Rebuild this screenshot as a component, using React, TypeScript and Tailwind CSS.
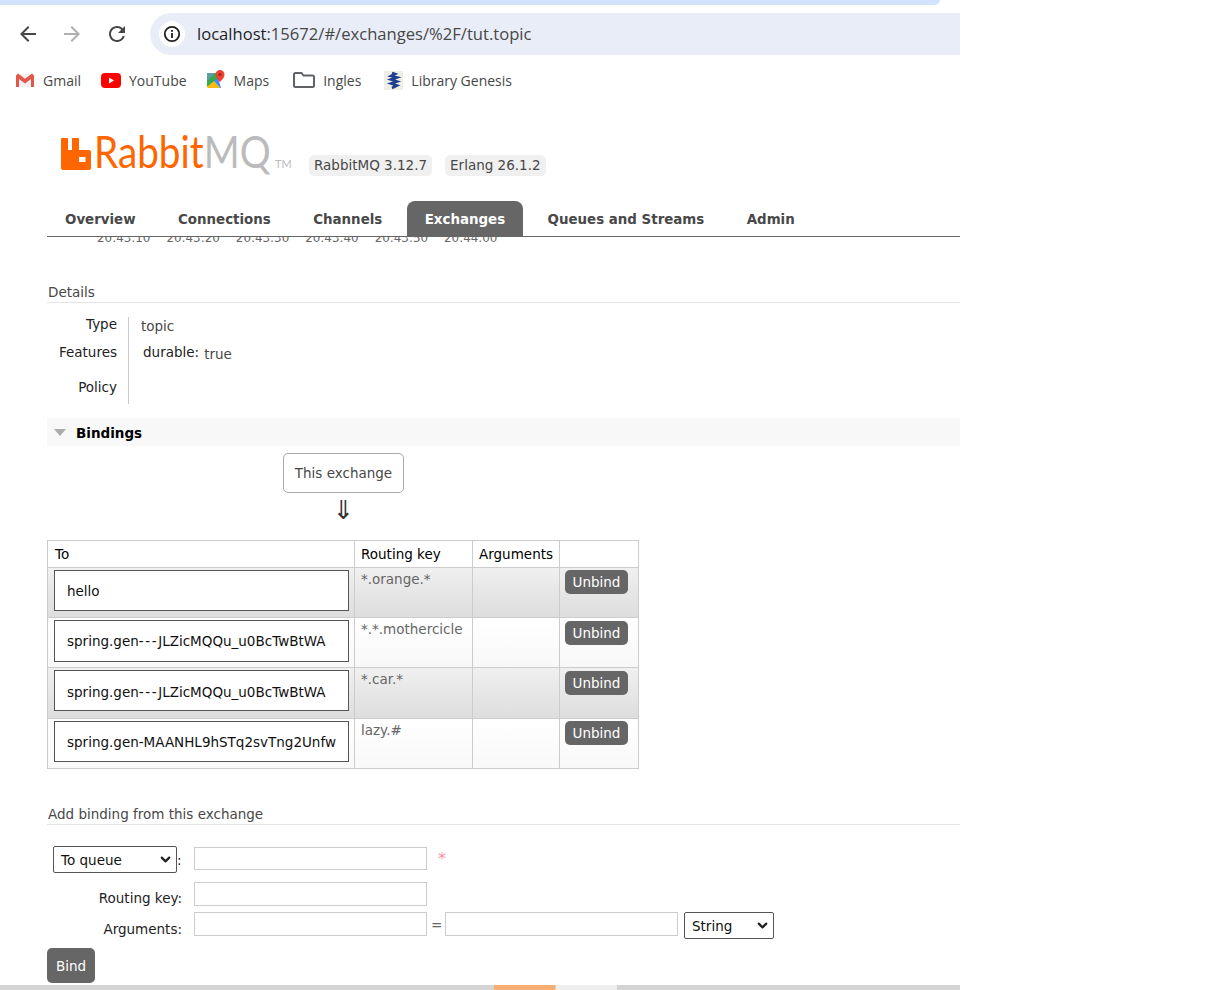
import type { ReactNode } from 'react';
import { ChevronDown } from 'lucide-react';

const bookmarkText = 'text-[14px] text-[#474747]';

const tabs = ['Overview', 'Connections', 'Channels', 'Exchanges', 'Queues and Streams', 'Admin'];
const ticks = ['20:43:10', '20:43:20', '20:43:30', '20:43:40', '20:43:50', '20:44:00'];

const jlz: ReactNode = (
  <>
    spring.gen<span className="tracking-[1.6px]">---</span>JLZicMQQu_u0BcTwBtWA
  </>
);

const bindings: { queue: ReactNode; key: string; alt: boolean; h: string; box: string; btn: string }[] = [
  { queue: 'hello', key: '*.orange.*', alt: true, h: 'h-[50px]', box: 'h-[41px] pt-[2px]', btn: 'pt-[2px]' },
  { queue: jlz, key: '*.*.mothercicle', alt: false, h: 'h-[50px]', box: 'h-[42px]', btn: 'pt-[3px]' },
  { queue: jlz, key: '*.car.*', alt: true, h: 'h-[51px]', box: 'h-[41px] pt-[4px]', btn: 'pt-[3px]' },
  { queue: 'spring.gen-MAANHL9hSTq2svTng2Unfw', key: 'lazy.#', alt: false, h: 'h-[50px]', box: 'h-[41px] pt-[2px]', btn: 'pt-[2px]' },
];

const GmailIcon = () => (
  <svg width="20" height="16" viewBox="0 0 20 16">
    <path d="M2 2h16v13H2z" fill="#f1f1f1" />
    <path d="M1 3.500V15h3V7l6 4.500L16 7v8h3V3.500L17 1.500 10 6.800 3 1.500z" fill="#e2574c" />
  </svg>
);

const YoutubeIcon = () => (
  <svg width="20" height="15" viewBox="0 0 20 15">
    <rect width="20" height="15" rx="4" fill="#ff0000" />
    <path d="M8 4.500v6l5-3z" fill="#ffffff" />
  </svg>
);

const MapsIcon = () => (
  <svg width="20" height="20" viewBox="0 0 20 20">
    <path d="M1 3h11v6L1 17z" fill="#34a853" />
    <path d="M1 3h8L1 11z" fill="#5f9ea0" />
    <path d="M1 17l7-6 6 7H2z" fill="#fbbc04" />
    <path d="M8 11l4-3 3 10h-1z" fill="#4285f4" />
    <path d="M14 0a4.500 4.500 0 00-4.500 4.500C9.500 8 14 12 14 12s4.500-4 4.500-7.500A4.500 4.500 0 0014 0z" fill="#ea4335" />
    <circle cx="14" cy="4.500" r="1.500" fill="#a52714" />
  </svg>
);

const FolderIcon = () => (
  <svg width="22" height="16" viewBox="0 0 22 16" fill="none">
    <path d="M2.500 1h6l2 2.500h9a1.500 1.500 0 011.500 1.500v8.500a1.500 1.500 0 01-1.500 1.500h-17A1.500 1.500 0 011 13.500v-11A1.500 1.500 0 012.500 1z" stroke="#5f6368" strokeWidth="2" />
  </svg>
);

const GenesisIcon = () => (
  <svg width="19" height="19" viewBox="0 0 19 19">
    <rect width="19" height="19" fill="#eeeee4" />
    <path d="M8 2l3 1-4 2 6 1.500-6 2 6 2-6 2 6 2-5 2.500" fill="none" stroke="#1c3f8f" strokeWidth="2.600" />
  </svg>
);

const RabbitMark = () => (
  <svg width="30" height="32" viewBox="0 0 30 32">
    <path
      fillRule="evenodd"
      d="M1 0h5c.6 0 1 .4 1 1v11h4V1c0-.6.4-1 1-1h5c.6 0 1 .4 1 1v11h10c1 0 2 .8 2 2v16c0 1-.8 2-2 2H2c-1 0-2-.8-2-2V1c0-.6.4-1 1-1zM18 19v5h6.500v-5z"
      fill="#ff6600"
    />
  </svg>
);

function SectionTitle({ children }: { children: string }) {
  return (
    <div className="ml-[47px] w-[913px] border-b border-[#e4e4e4] pl-px text-[13.5px] leading-[20px] text-[#484848]">
      {children}
    </div>
  );
}

function TextBox({ className = 'w-[233px] h-[24px]' }: { className?: string }) {
  return <input className={`${className} border border-[#cccccc] bg-white`} />;
}

function NativeSelect({ label, className }: { label: string; className: string }) {
  return (
    <div className={`${className} flex items-center justify-between rounded-[2px] border border-[#555555] pl-[7px] pr-[3px] text-[13.5px] text-[#111111]`}>
      <span className="mt-px">{label}</span>
      <ChevronDown size={15} strokeWidth={3.5} className="text-[#222222]" />
    </div>
  );
}

export default function App() {
  return (
    <div className="h-[990px] w-[1206px] overflow-hidden bg-white font-['DejaVu_Sans',sans-serif]">
      {/* browser chrome */}
      <div className="h-[5px] w-[940px] rounded-br-[6px] bg-[#d3e3fd]" />
      <div className="flex h-[50px] w-[960px] items-end">
        <div className="flex h-[42px] w-[150px] items-center pl-[16px]">
          <svg width="24" height="24" viewBox="0 0 24 24" fill="#474747">
            <path d="M20 11H7.830l5.590-5.590L12 4l-8 8 8 8 1.410-1.410L7.830 13H20v-2z" />
          </svg>
          <svg className="ml-[20px]" width="24" height="24" viewBox="0 0 24 24" fill="#b0b0b0">
            <path d="M4 11h12.170l-5.590-5.590L12 4l8 8-8 8-1.410-1.410L16.170 13H4v-2z" />
          </svg>
          <svg className="ml-[21px]" width="24" height="24" viewBox="0 0 24 24" fill="#474747">
            <path d="M17.650 6.350A7.958 7.958 0 0012 4c-4.420 0-7.990 3.580-7.990 8s3.570 8 7.990 8c3.730 0 6.840-2.550 7.730-6h-2.080A5.990 5.990 0 0112 18c-3.310 0-6-2.690-6-6s2.690-6 6-6c1.660 0 3.140.690 4.220 1.780L13 11h7V4l-2.350 2.350z" />
          </svg>
        </div>
        <div className="flex h-[42px] w-[810px] items-center rounded-l-full bg-[#e9edf7] pl-[9px]">
          <div className="flex h-[26px] w-[26px] items-center justify-center rounded-full bg-white">
            <svg width="18" height="18" viewBox="0 0 18 18" fill="none">
              <circle cx="9" cy="9" r="7.200" stroke="#1f1f1f" strokeWidth="1.800" />
              <rect x="8.100" y="8" width="1.800" height="5" fill="#1f1f1f" />
              <rect x="8.100" y="5" width="1.800" height="1.800" fill="#1f1f1f" />
            </svg>
          </div>
          <div className="ml-[12px] font-['Open_Sans',sans-serif] text-[16.600px] text-[#474747]">
            <span className="text-[#1f1f1f]">localhost</span>:15672/#/exchanges/%2F/tut.topic
          </div>
        </div>
      </div>

      {/* bookmarks */}
      <div className="flex h-[52px] w-[960px] items-center pb-[2px] pl-[15px] font-['Open_Sans',sans-serif]">
        <GmailIcon />
        <span className={`ml-[8px] ${bookmarkText}`}>Gmail</span>
        <div className="ml-[20px]"><YoutubeIcon /></div>
        <span className={`ml-[8px] ${bookmarkText}`}>YouTube</span>
        <div className="ml-[19px]"><MapsIcon /></div>
        <span className={`ml-[8px] ${bookmarkText}`}>Maps</span>
        <div className="ml-[24px]"><FolderIcon /></div>
        <span className={`ml-[8px] ${bookmarkText}`}>Ingles</span>
        <div className="ml-[23px]"><GenesisIcon /></div>
        <span className={`ml-[8px] ${bookmarkText}`}>Library Genesis</span>
      </div>

      {/* logo and versions */}
      <div className="flex h-[94px] w-[960px] items-start pl-[61px] pt-[31px]">
        <RabbitMark />
        <div className="ml-[3px] -mt-[15px] flex w-[197px] items-baseline font-['Lato',sans-serif] text-[45px] leading-[56px]">
          <div className="w-[176px] origin-left scale-x-[0.86] whitespace-nowrap">
            <span className="text-[#ff6600]">Rabbit</span>
            <span className="text-[#bbbbbb]">MQ</span>
          </div>
          <span className="ml-[5px] text-[11px] leading-none text-[#bbbbbb]">TM</span>
        </div>
        <div className="ml-[18px] mt-[17px] flex gap-[13px] text-[13.5px] leading-[21px] text-[#484848]">
          <span className="rounded-[5px] bg-[#f0f0f0] px-[5px]">RabbitMQ 3.12.7</span>
          <span className="rounded-[5px] bg-[#f0f0f0] px-[5px]">Erlang 26.1.2</span>
        </div>
      </div>

      {/* nav */}
      <div className="ml-[47px] flex h-[36px] w-[913px] items-end gap-[6.400px] border-b border-[#666666] text-[13.400px] font-bold text-[#484848]">
        {tabs.map((t) => (
          <div
            key={t}
            className={
              t === 'Exchanges'
                ? 'flex h-[35px] items-center rounded-t-[8px] bg-[#666666] px-[18px] pt-[4px] text-white'
                : 'flex h-[35px] items-center px-[18px] pt-[4px]'
            }
          >
            {t}
          </div>
        ))}
      </div>

      {/* tail of the chart, cut off under the nav */}
      <div className="ml-[97px] flex h-[7px] gap-[16px] overflow-hidden text-[11.900px] leading-none text-[#666666]">
        {ticks.map((t) => (
          <span key={t} className="-mt-[4px]">{t}</span>
        ))}
      </div>

      <div className="mt-[38px]">
        <SectionTitle>Details</SectionTitle>
      </div>

      <div className="ml-[47px] mt-[14px] flex h-[87px] text-[13.5px] text-[#222222]">
        <div className="-mt-px flex w-[70px] flex-col items-end">
          <span className="h-[28px] leading-[16px]">Type</span>
          <span className="h-[35px] leading-[16px]">Features</span>
          <span className="leading-[16px]">Policy</span>
        </div>
        <div className="ml-[11px] w-px bg-[#cccccc]" />
        <div className="flex flex-col pl-[12px]">
          <span className="h-[27px] pt-[1px] leading-[16px] text-[#484848]">topic</span>
          <div className="flex pl-[2px]">
            <span className="leading-[16px]">durable:</span>
            <span className="ml-[5px] mt-[2px] leading-[16px] text-[#484848]">true</span>
          </div>
        </div>
      </div>

      <div className="ml-[47px] mt-[14px] flex h-[28px] w-[913px] items-center bg-[#f8f8f8] pl-[7px] text-[13.5px] font-bold text-black">
        <div className="h-0 w-0 border-x-[6.500px] border-t-[7px] border-x-transparent border-t-[#aaaaaa]" />
        <span className="ml-[10px] mt-[2px]">Bindings</span>
      </div>

      {/* this exchange */}
      <div className="ml-[283px] mt-[7px] flex h-[40px] w-[121px] items-center justify-center rounded-[5px] border border-[#aaaaaa] text-[13.5px] text-[#484848]">
        This exchange
      </div>
      <div className="ml-[283px] flex h-[34px] w-[121px] items-center justify-center text-[26px] leading-none text-[#333333]">
        ⇓
      </div>

      {/* bindings table */}
      <table className="ml-[47px] mt-[13px] w-[591px] table-fixed border-collapse text-[13.5px]">
        <colgroup>
          <col className="w-[307px]" />
          <col className="w-[118px]" />
          <col className="w-[87px]" />
          <col className="w-[79px]" />
        </colgroup>
        <thead>
          <tr className="h-[27px] text-left text-black">
            <th className="border border-[#cccccc] px-[7px] font-normal">To</th>
            <th className="border border-[#cccccc] px-[6px] font-normal">Routing key</th>
            <th className="border border-[#cccccc] px-[6px] font-normal">Arguments</th>
            <th className="border border-[#cccccc]" />
          </tr>
        </thead>
        <tbody>
          {bindings.map((b, i) => (
            <tr
              key={i}
              className={`${b.h} ${b.alt ? 'bg-gradient-to-b from-[#f0f0f0] to-[#dddddd]' : 'bg-gradient-to-b from-[#ffffff] to-[#f8f8f8]'}`}
            >
              <td className="border border-[#cccccc] px-[6px] pt-[2px] align-top">
                <div className={`${b.box} flex w-[295px] items-center border border-[#555555] bg-white pl-[12px] whitespace-nowrap text-[#111111]`}>
                  <span>{b.queue}</span>
                </div>
              </td>
              <td className="border border-[#cccccc] px-[6px] pt-[3px] align-top leading-[16px] whitespace-nowrap text-[#666666]">
                {b.key}
              </td>
              <td className="border border-[#cccccc]" />
              <td className={`border border-[#cccccc] px-[5px] align-top ${b.btn}`}>
                <div className="flex h-[24px] w-[63px] items-center justify-center rounded-[5px] bg-[#666666] text-white">
                  Unbind
                </div>
              </td>
            </tr>
          ))}
        </tbody>
      </table>

      <div className="mt-[35px]">
        <SectionTitle>Add binding from this exchange</SectionTitle>
      </div>

      {/* add binding form */}
      <div className="ml-[53px] mt-[21px] flex h-[27px] items-start text-[13.5px] text-[#222222]">
        <NativeSelect label="To queue" className="h-[27px] w-[124px]" />
        <span className="mt-[4px] w-[5px]">:</span>
        <TextBox className="ml-[12px] mt-[1px] h-[23px] w-[233px]" />
        <span className="ml-[11px] mt-[1px] text-[16px] text-[#ff8fa8]">*</span>
      </div>
      <div className="mt-[9px] flex h-[24px] w-[427px] items-center justify-end text-[13.5px] text-[#222222]">
        <span className="mr-[12px] mt-[9px]">Routing key:</span>
        <TextBox />
      </div>
      <div className="mt-[6px] flex h-[27px] items-start text-[13.5px] text-[#222222]">
        <span className="mt-[7px] w-[182px] text-right">Arguments:</span>
        <TextBox className="ml-[12px] h-[24px] w-[233px]" />
        <span className="ml-[4px] mt-[3px] w-[14px] text-[#666666]">=</span>
        <TextBox />
        <NativeSelect label="String" className="ml-[6px] h-[27px] w-[90px]" />
      </div>
      <div className="ml-[47px] mt-[9px] flex h-[35px] w-[48px] items-center justify-center rounded-[5px] bg-[#666666] pt-[2px] text-[13.5px] text-white">
        Bind
      </div>

      {/* horizontal scrollbar of the page */}
      <div className="mt-[2px] flex h-[5px] w-[960px] bg-[#d4d4d4] pl-[494px]">
        <div className="w-[61px] bg-[#f8ae73]" />
        <div className="ml-px w-[61px] bg-[#eeeeee]" />
      </div>
    </div>
  );
}
